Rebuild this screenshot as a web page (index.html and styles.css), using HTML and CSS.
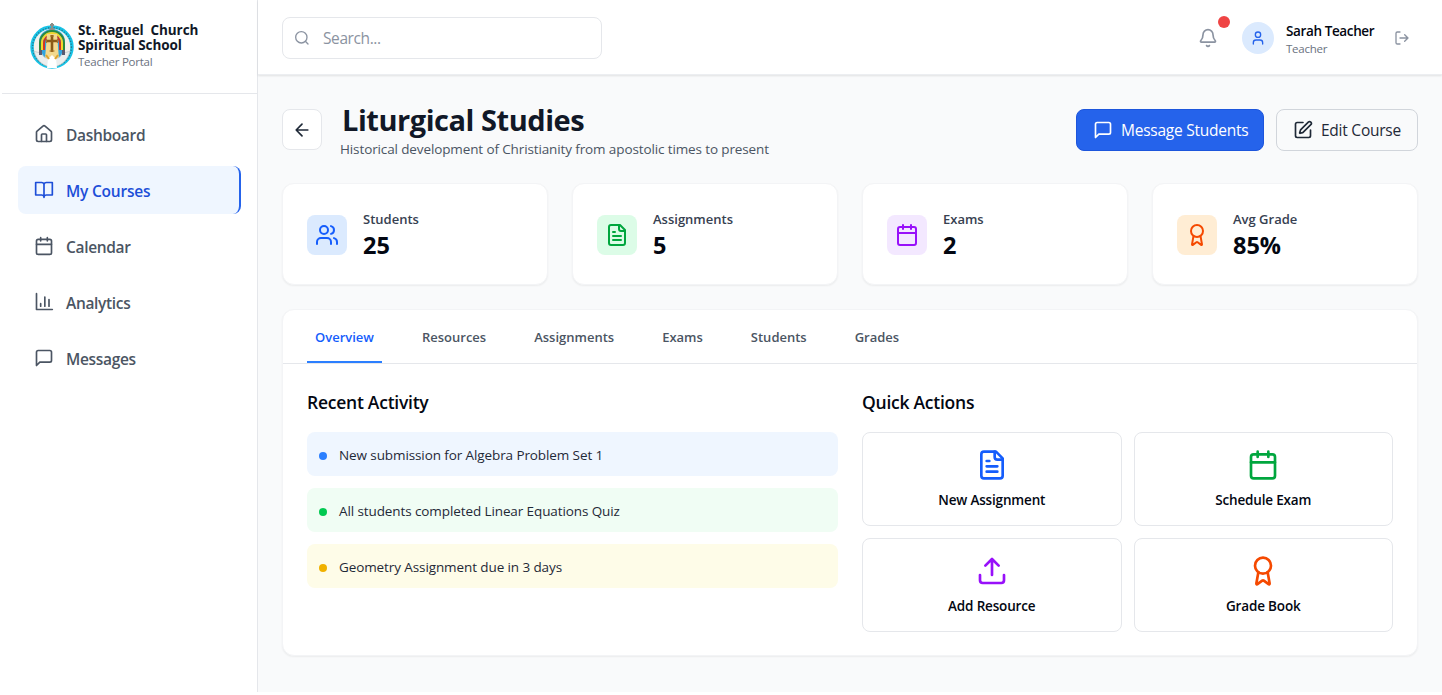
FILE: index.html
```html
<!DOCTYPE html>
<html lang="en">
<head>
<meta charset="utf-8">
<title>Liturgical Studies - Teacher Portal</title>
<link rel="stylesheet" href="styles.css">
</head>
<body>
<svg class="sprite" aria-hidden="true">
  <symbol id="i-home" viewBox="0 0 24 24"><path d="M15 21v-8a1 1 0 0 0-1-1h-4a1 1 0 0 0-1 1v8"/><path d="M3 10a2 2 0 0 1 .709-1.528l7-6a2 2 0 0 1 2.582 0l7 6A2 2 0 0 1 21 10v9a2 2 0 0 1-2 2H5a2 2 0 0 1-2-2z"/></symbol>
  <symbol id="i-book" viewBox="0 0 24 24"><path d="M12 5v16M2 3h7a3 3 0 0 1 3 2 3 3 0 0 1 3-2h7v15h-7a3 3 0 0 0-3 2 3 3 0 0 0-3-2H2z"/></symbol>
  <symbol id="i-calendar" viewBox="0 0 24 24"><path d="M8 2v4M16 2v4M3 10h18"/><rect width="18" height="18" x="3" y="4" rx="2"/></symbol>
  <symbol id="i-chart" viewBox="0 0 24 24"><path d="M3 2v19h19M8 17v-3M13 17V6M18 17V9"/></symbol>
  <symbol id="i-message" viewBox="0 0 24 24"><path d="M21 15a2 2 0 0 1-2 2H7l-4 4V5a2 2 0 0 1 2-2h14a2 2 0 0 1 2 2z"/></symbol>
  <symbol id="i-search" viewBox="0 0 24 24"><circle cx="11" cy="11" r="8.500"/><path d="m21 21-4-4"/></symbol>
  <symbol id="i-bell" viewBox="0 0 24 24"><path d="M10.268 21a2 2 0 0 0 3.464 0"/><path d="M3.262 15.326A1 1 0 0 0 4 17h16a1 1 0 0 0 .74-1.673C19.41 13.956 18 12.499 18 8A6 6 0 0 0 6 8c0 4.499-1.411 5.956-2.738 7.326"/></symbol>
  <symbol id="i-user" viewBox="0 0 24 24"><path d="M19 21v-2a4 4 0 0 0-4-4H9a4 4 0 0 0-4 4v2"/><circle cx="12" cy="7" r="4"/></symbol>
  <symbol id="i-logout" viewBox="0 0 24 24"><path d="m16 17 5-5-5-5M21 12H9M9 21H5a2 2 0 0 1-2-2V5a2 2 0 0 1 2-2h4"/></symbol>
  <symbol id="i-back" viewBox="0 0 24 24"><path d="m12 19-7-7 7-7M19 12H5"/></symbol>
  <symbol id="i-edit" viewBox="0 0 24 24"><path d="M12 3H5a2 2 0 0 0-2 2v14a2 2 0 0 0 2 2h14a2 2 0 0 0 2-2v-7"/><path d="M18.375 2.625a1 1 0 0 1 3 3l-9.013 9.014a2 2 0 0 1-.853.505l-2.873.84a.5.5 0 0 1-.62-.62l.84-2.873a2 2 0 0 1 .506-.852z"/></symbol>
  <symbol id="i-users" viewBox="0 0 24 24"><path d="M16 21v-2a4 4 0 0 0-4-4H6a4 4 0 0 0-4 4v2M16 3.128a4 4 0 0 1 0 7.744M22 21v-2a4 4 0 0 0-3-3.87"/><circle cx="9" cy="7" r="4"/></symbol>
  <symbol id="i-file" viewBox="0 0 24 24"><path d="M15 2H6a2 2 0 0 0-2 2v16a2 2 0 0 0 2 2h12a2 2 0 0 0 2-2V7Z"/><path d="M14 2v4a2 2 0 0 0 2 2h4M10 9H8M16 13H8M16 17H8"/></symbol>
  <symbol id="i-award" viewBox="0 0 24 24"><path d="m15.477 12.89 1.515 8.526a.5.5 0 0 1-.81.47l-3.58-2.687a1 1 0 0 0-1.197 0l-3.586 2.686a.5.5 0 0 1-.81-.469l1.514-8.526"/><circle cx="12" cy="8" r="6"/></symbol>
  <symbol id="i-upload" viewBox="0 0 24 24"><path d="M12 3v12M17 8l-5-5-5 5M21 15v4a2 2 0 0 1-2 2H5a2 2 0 0 1-2-2v-4"/></symbol>
</svg>
<div class="app">
  <aside class="sidebar">
    <div class="brand">
      <svg class="logo" viewBox="0 0 44 48">
        <circle cx="22" cy="25" r="20" fill="#f4f1ea" stroke="#19c3e6" stroke-width="3.400"/>
        <circle cx="22" cy="25" r="19.400" fill="none" stroke="#2a5a6b" stroke-width="1.400" stroke-dasharray="1.2 1.6" opacity=".7"/>
        <path d="M9 36V20a13 13 0 0 1 26 0v16z" fill="#2fa4e0"/>
        <path d="M10 28V21a12 12 0 0 1 24 0v7" fill="none" stroke="#2c8a3c" stroke-width="2"/>
        <path d="M12 28V21a10 10 0 0 1 20 0v7" fill="none" stroke="#f4d62a" stroke-width="2"/>
        <path d="M14 28V21a8 8 0 0 1 16 0v7" fill="none" stroke="#cf3527" stroke-width="2"/>
        <path d="M17 12h10l2 25H15z" fill="#f2d98f"/>
        <path d="M4 29c2 8 7 14 16 16l-1-9c-4 1-6-2-8-6-2 1-5 0-7-1zM40 29c-2 8-7 14-16 16l1-9c4 1 6-2 8-6 2 1 5 0 7-1z" fill="#eceeed" stroke="#b9c0c0" stroke-width=".7"/>
        <path d="M18 37l4-4 4 4 1 9H17z" fill="#fff"/>
        <path d="M22 13v17M16 19h12" stroke="#8a5a18" stroke-width="2.600"/>
        <path d="M20 14h4M16.500 17v4M27.500 17v4M19.500 29h5" stroke="#a97728" stroke-width="1.200"/>
        <path d="M16 33l3 4M28 33l-3 4" stroke="#dfa52c" stroke-width="2"/>
        <path d="M9 28h3v5H9zM32 28h3v5h-3z" fill="#595b70"/>
        <path d="M22 1v7M20 3h4M19.500 7h5" stroke="#8b8d88" stroke-width="2"/>
      </svg>
      <div class="brand-text">
        <div class="brand-name">St. Raguel&nbsp; Church<br>Spiritual School</div>
        <div class="brand-sub">Teacher Portal</div>
      </div>
    </div>
    <nav class="nav">
      <a class="nav-item"><svg class="icon s20"><use href="#i-home"/></svg><span>Dashboard</span></a>
      <a class="nav-item active"><svg class="icon s20"><use href="#i-book"/></svg><span>My Courses</span></a>
      <a class="nav-item"><svg class="icon s20"><use href="#i-calendar"/></svg><span>Calendar</span></a>
      <a class="nav-item"><svg class="icon s20"><use href="#i-chart"/></svg><span>Analytics</span></a>
      <a class="nav-item"><svg class="icon s20"><use href="#i-message"/></svg><span>Messages</span></a>
    </nav>
  </aside>
  <div class="content">
    <header class="topbar">
      <div class="search"><svg class="icon s16"><use href="#i-search"/></svg><span>Search...</span></div>
      <div class="account">
        <div class="bell"><svg class="icon s20"><use href="#i-bell"/></svg><span class="badge"></span></div>
        <div class="avatar"><svg class="icon s16"><use href="#i-user"/></svg></div>
        <div class="who"><div class="who-name">Sarah Teacher</div><div class="who-role">Teacher</div></div>
        <svg class="icon s16 logout"><use href="#i-logout"/></svg>
      </div>
    </header>
    <main class="main">
      <section class="heading">
        <div class="back"><svg class="icon s20"><use href="#i-back"/></svg></div>
        <div class="titles">
          <h1>Liturgical Studies</h1>
          <p>Historical development of Christianity from apostolic times to present</p>
        </div>
        <button class="btn primary"><svg class="icon s20"><use href="#i-message"/></svg><span>Message Students</span></button>
        <button class="btn"><svg class="icon s20"><use href="#i-edit"/></svg><span>Edit Course</span></button>
      </section>
      <section class="stats">
        <div class="card stat"><div class="tile blue"><svg class="icon s24"><use href="#i-users"/></svg></div><div><div class="stat-label">Students</div><div class="stat-value">25</div></div></div>
        <div class="card stat"><div class="tile green"><svg class="icon s24"><use href="#i-file"/></svg></div><div><div class="stat-label">Assignments</div><div class="stat-value">5</div></div></div>
        <div class="card stat"><div class="tile purple"><svg class="icon s24"><use href="#i-calendar"/></svg></div><div><div class="stat-label">Exams</div><div class="stat-value">2</div></div></div>
        <div class="card stat"><div class="tile orange"><svg class="icon s24"><use href="#i-award"/></svg></div><div><div class="stat-label">Avg Grade</div><div class="stat-value">85%</div></div></div>
      </section>
      <section class="card panel">
        <div class="tabs">
          <span class="tab active">Overview</span><span class="tab">Resources</span><span class="tab">Assignments</span><span class="tab">Exams</span><span class="tab">Students</span><span class="tab">Grades</span>
        </div>
        <div class="panel-body">
          <div>
            <h2>Recent Activity</h2>
            <div class="activity">
              <div class="row row-blue"><i class="dot"></i><span>New submission for Algebra Problem Set 1</span></div>
              <div class="row row-green"><i class="dot"></i><span>All students completed Linear Equations Quiz</span></div>
              <div class="row row-yellow"><i class="dot"></i><span>Geometry Assignment due in 3 days</span></div>
            </div>
          </div>
          <div>
            <h2>Quick Actions</h2>
            <div class="actions">
              <div class="action"><svg class="icon s32 c-blue"><use href="#i-file"/></svg><span>New Assignment</span></div>
              <div class="action"><svg class="icon s32 c-green"><use href="#i-calendar"/></svg><span>Schedule Exam</span></div>
              <div class="action"><svg class="icon s32 c-purple"><use href="#i-upload"/></svg><span>Add Resource</span></div>
              <div class="action"><svg class="icon s32 c-orange"><use href="#i-award"/></svg><span>Grade Book</span></div>
            </div>
          </div>
        </div>
      </section>
    </main>
  </div>
</div>
</body>
</html>
```
FILE: styles.css
```css
* { box-sizing: border-box; margin: 0; }
body { font-family: "Open Sans", "Noto Sans", sans-serif; font-size: 13.5px; line-height: 20px; color: #030712; background: #fff; }
.sprite { display: none; }
.app { display: flex; height: 692px; margin-left: 2px; }
.icon { flex: none; fill: none; stroke: currentColor; stroke-width: 2; stroke-linecap: round; stroke-linejoin: round; }
.s16 { width: 16px; height: 16px; }
.s20 { width: 20px; height: 20px; }
.s24 { width: 24px; height: 24px; }
.s32 { width: 32px; height: 32px; }

.sidebar { width: 256px; flex: none; border-right: 1px solid #e5e7eb; background: #fff; }
.brand { display: flex; height: 94px; padding: 22px 0 0 28px; gap: 4px; border-bottom: 1px solid #e5e7eb; }
.logo { width: 44px; height: 48px; flex: none; }
.brand-name { font-size: 13.5px; line-height: 15px; padding-top: 1px; font-weight: 700; color: #111827; letter-spacing: -.07px; white-space: nowrap; }
.brand-sub { font-size: 11.5px; line-height: 17px; color: #6b7280; letter-spacing: -.25px; }
.nav { display: flex; flex-direction: column; gap: 8px; padding: 16px; }
.nav-item { display: flex; align-items: center; gap: 12px; height: 48px; padding: 0 16px; border-radius: 8px; font-size: 15.5px; font-weight: 600; color: #4b5563; letter-spacing: -.33px; }
.nav-item span { padding-top: 2px; }
.nav-item.active { background: #eff6ff; color: #1d4ed8; border-right: 2px solid #2563eb; letter-spacing: -.22px; }

.content { flex: 1; background: #f9fafb; min-width: 0; }
.topbar { display: flex; justify-content: space-between; align-items: center; height: 75px; padding: 2px 32px 0 24px; background: #fff; border-bottom: 1px solid #eceef1; box-shadow: 0 1px 2px rgba(0,0,0,.1); }
.search { display: flex; align-items: center; gap: 13px; width: 320px; height: 42px; padding: 0 11px; border: 1px solid #e5e7eb; border-radius: 8px; color: #8b93a1; font-size: 15.5px; letter-spacing: -.4px; }
.account { display: flex; align-items: center; }
.bell { position: relative; display: flex; color: #8b93a1; margin-right: 24px; }
.badge { position: absolute; width: 12px; height: 12px; right: -12px; top: -12px; border-radius: 50%; background: #ef4444; }
.avatar { display: grid; place-items: center; width: 32px; height: 32px; border-radius: 50%; background: #dbeafe; color: #2563eb; margin-right: 12px; }
.who { width: 108px; padding-top: 2px; white-space: nowrap; }
.who-name { font-weight: 600; line-height: 19px; letter-spacing: -.38px; }
.who-role { font-size: 11.5px; line-height: 16px; color: #6b7280; letter-spacing: -.25px; }
.logout { color: #8b93a1; }

.main { padding: 24px; }
.heading { display: flex; height: 84px; padding-top: 10px; }
.back { display: grid; place-items: center; width: 40px; height: 41px; background: #fff; border: 1px solid #e5e7eb; border-radius: 8px; color: #1f2937; }
.titles { flex: 1; padding-left: 18px; white-space: nowrap; }
h1 { font-size: 29px; line-height: 36px; margin-top: -7px; margin-bottom: 1px; padding-left: 2px; color: #111827; letter-spacing: -.46px; }
.titles p { color: #4b5563; letter-spacing: -.12px; line-height: 20px; }
.btn { display: flex; align-items: center; gap: 8px; height: 42px; padding: 0 16px; border: 1px solid #d1d5db; border-radius: 8px; background: transparent; color: #1f2937; font: inherit; font-size: 15.5px; letter-spacing: -.24px; white-space: nowrap; width: 142px; }
.btn.primary { width: 188px; background: #2563eb; border-color: #1d55dc; color: #fff; margin-right: 12px; }

.card { background: #fff; border: 1px solid #f3f4f6; border-radius: 12px; box-shadow: 0 1px 2px rgba(0,0,0,.06); }
.stats { display: grid; grid-template-columns: repeat(4, 1fr); gap: 24px; margin-bottom: 24px; }
.stat { display: flex; align-items: center; gap: 16px; height: 102px; padding: 1px 24px 0; }
.tile { display: grid; place-items: center; width: 40px; height: 40px; border-radius: 8px; }
.blue { background: #dbeafe; color: #155dfc; }
.green { background: #dcfce7; color: #00a63e; }
.purple { background: #f3e8ff; color: #9810fa; }
.orange { background: #ffedd4; color: #f54900; }
.stat-label { padding-top: 1px; font-size: 13px; font-weight: 600; color: #374151; }
.stat-value { font-size: 23.5px; line-height: 32px; font-weight: 700; }

.panel { height: 347px; }
.tabs { display: flex; height: 54px; padding: 0 24px; gap: 32px; border-bottom: 1px solid #e5e7eb; }
.tab { padding: 17px 8px 0; font-size: 13px; font-weight: 600; color: #4b5563; border-bottom: 2px solid transparent; }
.tab.active { color: #155dfc; border-color: #2b7fff; }
.panel-body { display: grid; grid-template-columns: 1fr 1fr; gap: 24px; padding: 24px; }
h2 { font-size: 17.5px; line-height: 28px; font-weight: 600; margin-bottom: 16px; letter-spacing: -.25px; }
.activity { display: flex; flex-direction: column; gap: 12px; }
.row { display: flex; align-items: center; gap: 12px; height: 44px; padding: 0 12px; border-radius: 8px; color: #1f2937; letter-spacing: -.1px; }
.row span { padding-top: 2px; }
.dot { width: 8px; height: 8px; border-radius: 50%; margin-top: 3px; }
.row-blue { background: #eff6ff; }
.row-blue .dot { background: #2b7fff; }
.row-green { background: #f0fdf4; }
.row-green .dot { background: #00c951; }
.row-yellow { background: #fefce8; }
.row-yellow .dot { background: #f0b100; }
.actions { display: grid; grid-template-columns: 1fr 1fr; gap: 12px; }
.action { display: flex; flex-direction: column; align-items: center; gap: 9px; height: 94px; padding-top: 16px; border: 1px solid #e5e7eb; border-radius: 8px; font-weight: 600; letter-spacing: -.17px; }
.c-blue { color: #155dfc; }
.c-green { color: #00a63e; }
.c-purple { color: #9810fa; }
.c-orange { color: #f54900; }
```
